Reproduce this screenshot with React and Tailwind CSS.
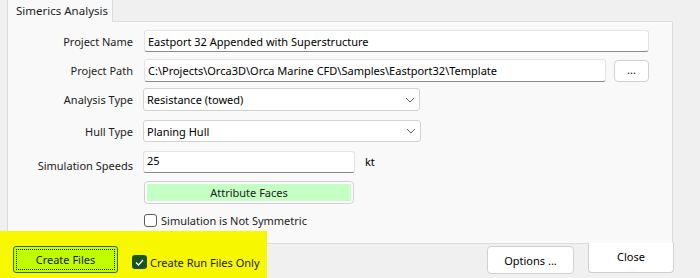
import React from 'react';

const Chevron = () => (
  <svg width="10" height="6" viewBox="0 0 10 6" className="shrink-0">
    <path d="M1 1 L5 5 L9 1" fill="none" stroke="#5f5f5f" strokeWidth="1" />
  </svg>
);

const Label = ({ children, className = '' }) => (
  <div className={`w-[126px] shrink-0 text-right pr-px text-[#1b1b1b] ${className}`}>{children}</div>
);

const TextBox = ({ value, className = '' }) => (
  <div className={`h-full bg-white border border-[#e3e3e3] border-b-[#8a8a8a] rounded-[3px] flex items-center pl-[3px] text-black ${className}`}>
    {value}
  </div>
);

const Combo = ({ value, className = '' }) => (
  <div className={`h-full bg-white border border-[#d2d2d2] rounded-[3px] flex items-center justify-between pl-[3px] pr-[4px] text-black ${className}`}>
    <span>{value}</span>
    <Chevron />
  </div>
);

export default function App() {
  return (
    <div className="relative w-[700px] h-[278px] bg-[#f0f0f0] overflow-hidden text-[11px] leading-none" style={{ fontFamily: '"Noto Sans", "Segoe UI", sans-serif' }}>
      {/* tab strip */}
      <div className="h-[21px] flex items-end pl-[7px]">
        <div className="h-[22px] w-[106px] bg-[#f9f9f9] border-l border-r border-[#dcdcdc] flex items-center pl-[8px] -mb-px relative z-10 text-[#1b1b1b] text-[11.5px]">
          Simerics Analysis
        </div>
      </div>

      {/* panel */}
      <div className="ml-[7px] w-[666px] h-[223px] bg-[#f9f9f9] border border-[#dcdcdc] pt-[8px]">
        <div className="flex items-center h-[22px]">
          <Label>Project Name</Label>
          <div className="ml-[10px] w-[505px] h-full"><TextBox value="Eastport 32 Appended with Superstructure" /></div>
        </div>

        <div className="flex items-center h-[23px] mt-[7px]">
          <Label>Project Path</Label>
          <div className="ml-[10px] w-[462px] h-full"><TextBox value="C:\Projects\Orca3D\Orca Marine CFD\Samples\Eastport32\Template" /></div>
          <div className="ml-[8px] w-[35px] h-[22px] bg-white border border-[#d0d0d0] rounded-[4px] flex items-center justify-center text-black pb-[3px]">...</div>
        </div>

        <div className="flex items-center h-[23px] mt-[6px]">
          <Label>Analysis Type</Label>
          <div className="ml-[9px] w-[277px] h-full"><Combo value="Resistance (towed)" /></div>
        </div>

        <div className="flex items-center h-[22px] mt-[9px]">
          <Label>Hull Type</Label>
          <div className="ml-[9px] w-[278px] h-full"><Combo value="Planing Hull" /></div>
        </div>

        <div className="flex items-center h-[22px] mt-[9px]">
          <Label className="pt-[7px] pr-[5px]">Simulation Speeds</Label>
          <div className="ml-[9px] w-[212px] h-full"><TextBox value="25" className="items-start pt-[3px]" /></div>
          <span className="ml-[10px] text-black pb-[2px]">kt</span>
        </div>

        <div className="ml-[136px] mt-[8px] w-[210px] h-[23px] bg-white border border-[#cfcfcf] rounded-[4px] p-[2px]">
          <div className="w-full h-full bg-[#c4ffc4] flex items-center justify-center text-[#1b1b1b]">Attribute Faces</div>
        </div>

        <div className="ml-[136px] mt-[10px] flex items-center">
          <div className="w-[13px] h-[13px] bg-white border border-[#5a5a5a] rounded-[3px]" />
          <span className="ml-[4px] text-[#1b1b1b]">Simulation is Not Symmetric</span>
        </div>
      </div>

      {/* highlight annotation */}
      <div className="absolute left-0 top-[231px] w-[267px] h-[47px] bg-[#f7f700]" />

      {/* bottom buttons */}
      <div className="relative flex items-start h-[35px]">
        <div className="ml-[13px] mt-[2px] w-[105px] h-[27px] bg-[#c0ff00] border border-[#2d6b2d] rounded-[3px] p-[2px]">
          <div className="w-full h-full border border-dotted border-black flex items-center justify-center text-[#1b1b1b]">Create Files</div>
        </div>
        <div className="ml-[14px] mt-[11px] flex items-center">
          <div className="w-[15px] h-[14px] bg-[#19561d] rounded-[3px] flex items-center justify-center">
            <svg width="9" height="7" viewBox="0 0 9 7">
              <path d="M1 3.5 L3.5 6 L8 1" fill="none" stroke="#ffffff" strokeWidth="1.3" />
            </svg>
          </div>
          <span className="ml-[3px] text-[#1b1b1b]">Create Run Files Only</span>
        </div>
        <div className="ml-auto mt-[2px] w-[87px] h-[28px] bg-white border border-[#d0d0d0] rounded-[4px] flex items-center justify-center text-black">Options ...</div>
        <div className="ml-[14px] mr-[26px] -mt-[1px] w-[86px] h-[30px] bg-white border border-[#d0d0d0] border-t-0 rounded-b-[4px] flex items-center justify-center text-black pb-[2px]">Close</div>
      </div>
    </div>
  );
}
